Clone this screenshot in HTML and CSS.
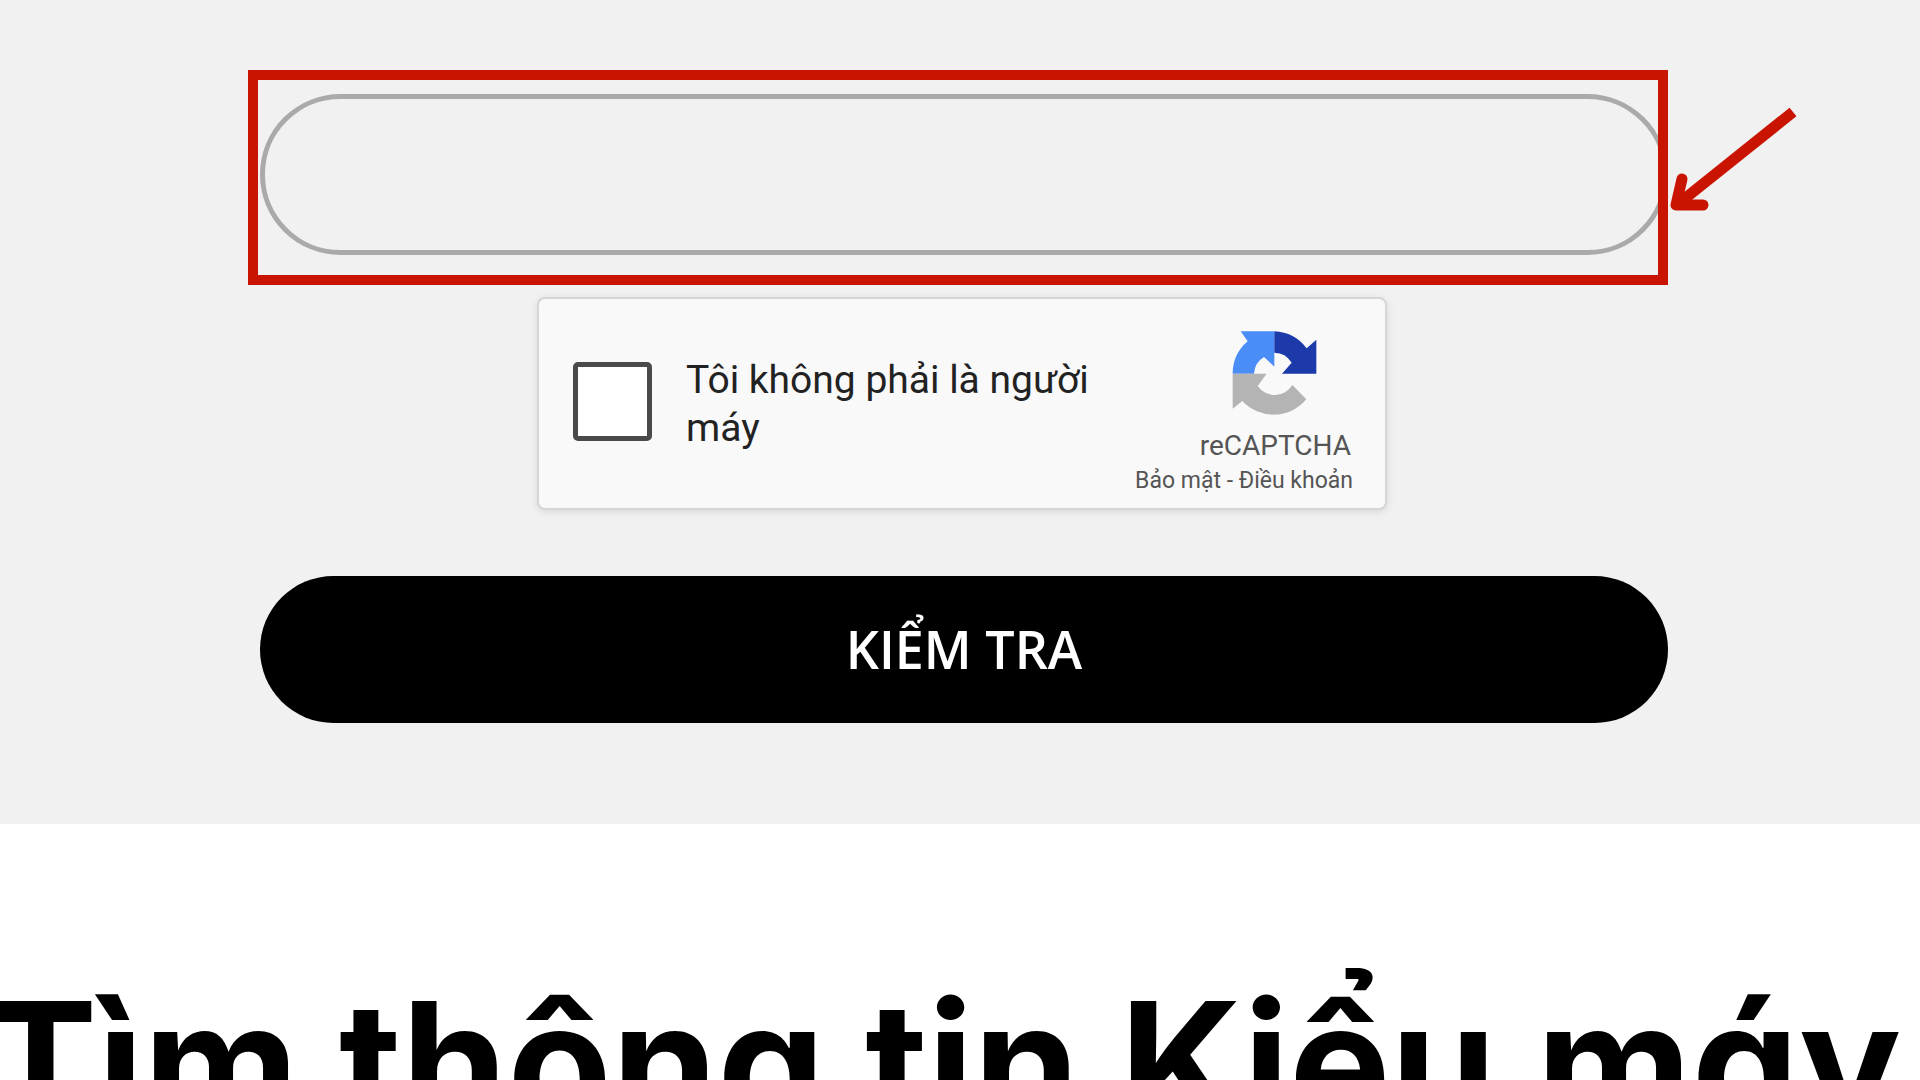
FILE: index.html
```html
<!DOCTYPE html>
<html lang="vi">
<head>
<meta charset="utf-8">
<meta name="viewport" content="width=device-width, initial-scale=1">
<title>Kiểm tra</title>
<link rel="stylesheet" href="styles.css">
</head>
<body>
<main>
  <form class="check">
    <div class="field">
      <input class="field-input" type="text" aria-label="Số sê-ri">
      <span class="field-frame"></span>
      <svg class="field-arrow" viewBox="0 0 130 120" aria-hidden="true">
        <path d="M125 8 10 100" stroke-width="11"/>
        <path d="M14 75 8 101 35 101" stroke-width="11" stroke-linecap="round" stroke-linejoin="round"/>
      </svg>
    </div>
    <div class="captcha-row">
      <div class="captcha">
        <input class="captcha-box" type="checkbox" id="human">
        <label class="captcha-label" for="human">Tôi không phải là người máy</label>
        <div class="captcha-brand">
          <svg class="captcha-logo" viewBox="396 152 255 258" aria-hidden="true">
            <path fill="#4a8df6" d="M398 280A128 128 0 0 1 443 183L422 153H523V259L492 230A62 62 0 0 0 462 280Z"/>
            <path fill="#1c3aa9" d="M523 153A128 128 0 0 1 620 204L649 178V280H546L575 247A62 62 0 0 0 523 217Z"/>
            <path fill="#b4b4b4" d="M398 280H500L473 317A62 62 0 0 0 577 314L619 357A128 128 0 0 1 427 362L398 385Z"/>
          </svg>
          <span class="captcha-name">reCAPTCHA</span>
          <span class="captcha-links"><a href="#">Bảo mật</a> - <a href="#">Điều khoản</a></span>
        </div>
      </div>
    </div>
    <button class="submit" type="submit">KIỂM TRA</button>
  </form>
  <section class="info">
    <h2 class="info-title">Tìm thông tin Kiểu máy</h2>
  </section>
</main>
</body>
</html>
```
FILE: styles.css
```css
* {
  box-sizing: border-box;
}

body {
  height: 100vh;
  margin: 0;
  overflow: hidden;
  background: #fff;
  font-family: Roboto, "Liberation Sans", sans-serif;
}

.check {
  padding: 94px 252px 101px 260px;
  background: #f1f1f1;
}

.field {
  position: relative;
}

.field-input {
  display: block;
  width: 100%;
  height: 161px;
  padding: 0 80px;
  border: 5px solid #aaa;
  border-radius: 81px;
  background: transparent;
  font: 48px Roboto, sans-serif;
  outline: none;
}

/* Highlight drawn over the text box */
.field-frame {
  position: absolute;
  inset: -24px 0 -30px -12px;
  border: 10px solid #c81400;
  pointer-events: none;
}

.field-arrow {
  position: absolute;
  top: 10px;
  left: 100%;
  width: 130px;
  height: 120px;
  fill: none;
  stroke: #c81400;
}

.captcha-row {
  display: flex;
  justify-content: center;
  padding: 42px 4px 66px 0;
}

.captcha {
  display: flex;
  align-items: center;
  width: 850px;
  height: 213px;
  padding: 0 32px 0 34px;
  border: 2px solid #d6d6d6;
  border-radius: 8px;
  background: #f9f9f9;
  box-shadow: 0 2px 8px rgba(0, 0, 0, 0.1);
}

.captcha-box {
  appearance: none;
  flex: none;
  width: 79px;
  height: 79px;
  margin: 0 34px 4px 0;
  border: 5px solid #4a4a4a;
  border-radius: 5px;
  background: #fff;
}

.captcha-label {
  flex: 1;
  color: #222;
  font-size: 39px;
  line-height: 48px;
}

.captcha-brand {
  display: flex;
  flex-direction: column;
  align-items: flex-end;
  padding-top: 22px;
  color: #555;
  white-space: nowrap;
}

.captcha-logo {
  width: 85px;
  height: 86px;
  margin: 0 36px 11px 0;
}

.captcha-name {
  margin-right: 2px;
  font-size: 28px;
  line-height: 36px;
}

.captcha-links {
  font-size: 23px;
  line-height: 34px;
}

.captcha-links a {
  color: inherit;
  text-decoration: none;
}

.submit {
  display: block;
  width: 100%;
  height: 147px;
  padding: 0 0 2px;
  border: 0;
  border-radius: 74px;
  background: #000;
  color: #fff;
  font: 600 52px "Open Sans", sans-serif;
}

.info {
  padding-top: 140px;
}

.info-title {
  margin: 0 0 0 -16px;
  font-family: Inter, sans-serif;
  font-size: 170px;
  font-weight: 700;
  font-feature-settings: "cv11";
  line-height: 198px;
  white-space: nowrap;
}
```
